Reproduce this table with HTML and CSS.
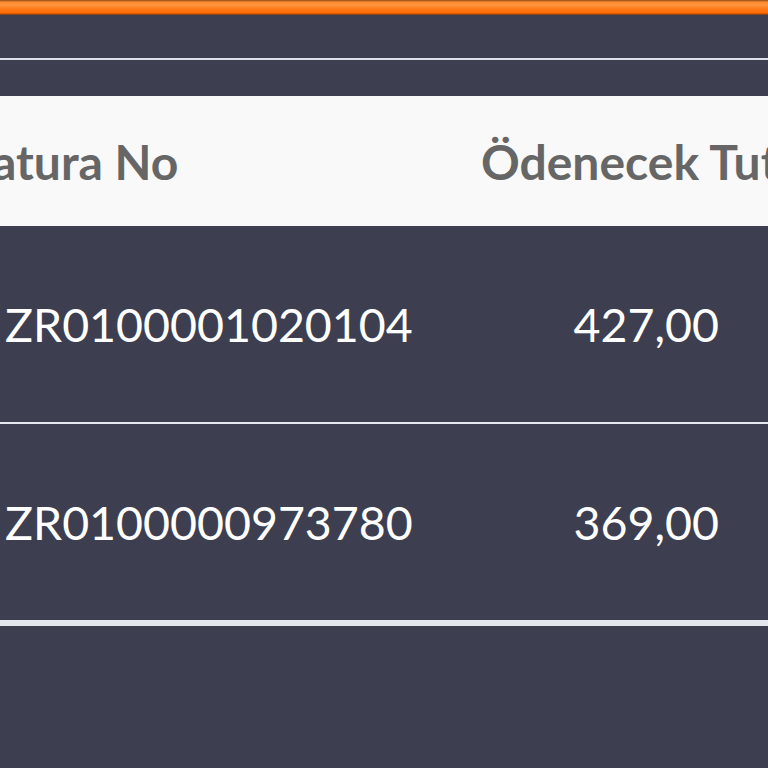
FILE: index.html
```html
<!DOCTYPE html>
<html lang="tr">
<head>
<meta charset="utf-8">
<title>Faturalar</title>
<link rel="stylesheet" href="styles.css">
</head>
<body>
<div class="topbar"></div>
<div class="toolbar"></div>
<div class="rule"></div>
<div class="table">
  <div class="head first"><span class="head-text clip">Fatura No</span></div>
  <div class="head second"><span class="head-text">Ödenecek Tutar</span></div>
  <div class="cell id">ZR0100001020104</div>
  <div class="cell amount">427,00</div>
  <div class="sep"></div>
  <div class="cell id">ZR0100000973780</div>
  <div class="cell amount">369,00</div>
  <div class="endline"></div>
</div>
</body>
</html>
```

FILE: styles.css
```css
html, body {
  margin: 0;
  padding: 0;
  background: #3d3f51;
  overflow: hidden;
  width: 768px;
  height: 768px;
  font-family: Lato, "Noto Sans", sans-serif;
}
.topbar {
  height: 15px;
  background: linear-gradient(to bottom, #8a4a1c 0px, #ff8a2e 2px, #ff9640 5px, #ff7a18 9px, #ff6a00 13px, #6b3a1a 15px);
}
.toolbar {
  height: 43px;
}
.rule {
  height: 2px;
  background: #dde0ea;
  margin-bottom: 36px;
}
.table {
  display: grid;
  grid-template-columns: 481px 287px;
}
.head {
  height: 130px;
  background: #f9f9f9;
  display: flex;
  align-items: center;
  white-space: nowrap;
  overflow: visible;
}
.head-text {
  font-weight: 700;
  font-size: 48px;
  color: #666666;
}
.clip {
  margin-left: -32px;
}
.cell {
  height: 196px;
  display: flex;
  align-items: center;
  color: #ffffff;
  font-size: 46.5px;
  white-space: nowrap;
}
.id {
  padding-left: 5px;
}
.amount {
  justify-content: flex-end;
  padding-right: 49px;
}
.sep {
  grid-column: 1 / -1;
  height: 2px;
  background: #e6e9ef;
}
.endline {
  grid-column: 1 / -1;
  height: 6px;
  background: #e4e8ee;
}
```
